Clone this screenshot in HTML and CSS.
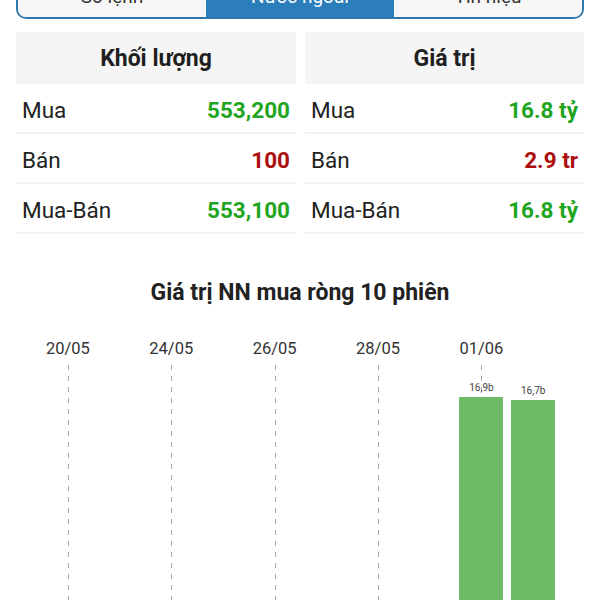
FILE: index.html
```html
<!DOCTYPE html>
<html lang="vi">
<head>
    <meta charset="UTF-8">
    <meta name="viewport" content="width=device-width, initial-scale=1.0">
    <title>Nước ngoài</title>
    <link rel="stylesheet" href="styles.css">
</head>
<body>
    <div class="page">
        <div class="tabs">
            <div class="tab">Sổ lệnh</div>
            <div class="tab active">Nước ngoài</div>
            <div class="tab">Tín hiệu</div>
        </div>

        <div class="tables">
            <div class="stat-table">
                <div class="stat-head">Khối lượng</div>
                <div class="stat-row"><span>Mua</span><span class="up">553,200</span></div>
                <div class="stat-row"><span>Bán</span><span class="down">100</span></div>
                <div class="stat-row"><span>Mua-Bán</span><span class="up">553,100</span></div>
            </div>
            <div class="stat-table">
                <div class="stat-head">Giá trị</div>
                <div class="stat-row"><span>Mua</span><span class="up">16.8 tỷ</span></div>
                <div class="stat-row"><span>Bán</span><span class="down">2.9 tr</span></div>
                <div class="stat-row"><span>Mua-Bán</span><span class="up">16.8 tỷ</span></div>
            </div>
        </div>

        <h2 class="chart-title">Giá trị NN mua ròng 10 phiên</h2>

        <div class="chart">
            <div class="col"><div class="date">20/05</div><div class="plot dashed"></div></div>
            <div class="col"><div class="date"></div><div class="plot"></div></div>
            <div class="col"><div class="date">24/05</div><div class="plot dashed"></div></div>
            <div class="col"><div class="date"></div><div class="plot"></div></div>
            <div class="col"><div class="date">26/05</div><div class="plot dashed"></div></div>
            <div class="col"><div class="date"></div><div class="plot"></div></div>
            <div class="col"><div class="date">28/05</div><div class="plot dashed"></div></div>
            <div class="col"><div class="date"></div><div class="plot"></div></div>
            <div class="col">
                <div class="date">01/06</div>
                <div class="plot dashed">
                    <div class="bar-label">16,9b</div>
                    <div class="bar" style="height: 308px"></div>
                </div>
            </div>
            <div class="col">
                <div class="date"></div>
                <div class="plot">
                    <div class="bar-label">16,7b</div>
                    <div class="bar" style="height: 305px"></div>
                </div>
            </div>
        </div>
    </div>
</body>
</html>
```

FILE: styles.css
```css
body {
    margin: 0;
    padding: 0;
    background-color: #ffffff;
    font-family: Roboto, "Noto Sans", sans-serif;
    color: #222222;
}

.page {
    padding: 0 16px;
    overflow: hidden;
}

.tabs {
    display: flex;
    margin-top: -22px;
    height: 41px;
    border: 2px solid #2f77ad;
    border-radius: 0 0 10px 10px;
    overflow: hidden;
    box-sizing: border-box;
}

.tab {
    flex: 1;
    display: flex;
    align-items: center;
    justify-content: center;
    padding-bottom: 5px;
    font-size: 19px;
    background-color: #f6f6f6;
    color: #333333;
}

.tab.active {
    background-color: #2b7dbb;
    color: #ffffff;
}

.tables {
    display: grid;
    grid-template-columns: 280px 1fr;
    gap: 9px;
    margin-top: 13px;
}

.stat-head {
    height: 52px;
    display: flex;
    align-items: center;
    justify-content: center;
    background-color: #f5f5f5;
    font-size: 23px;
    font-weight: 700;
    color: #1f1f1f;
}

.stat-row {
    height: 50px;
    display: flex;
    align-items: center;
    justify-content: space-between;
    padding: 3px 6px 0;
    border-bottom: 2px solid #f3f3f3;
    box-sizing: border-box;
    font-size: 22.5px;
    color: #222222;
}

.stat-row .up,
.stat-row .down {
    font-weight: 700;
}

.up {
    color: #1fa51f;
}

.down {
    color: #ac0e0e;
}

.chart-title {
    margin: 45px 0 0;
    text-align: center;
    font-size: 23px;
    font-weight: 700;
    color: #222222;
}

.chart {
    display: grid;
    grid-template-columns: repeat(10, 1fr);
    padding: 0 25px 0 26px;
    margin-top: 33px;
}

.col {
    display: flex;
    flex-direction: column;
    align-items: center;
}

.date {
    height: 22px;
    font-size: 16.5px;
    color: #333333;
    margin-bottom: 4px;
}

.plot {
    position: relative;
    width: 100%;
    height: 340px;
    display: flex;
    flex-direction: column;
    justify-content: flex-end;
    align-items: center;
}

.plot.dashed::before {
    content: "";
    position: absolute;
    top: 0;
    bottom: 0;
    left: 50%;
    width: 1px;
    background: repeating-linear-gradient(to bottom, #a8a8a8 0, #a8a8a8 5px, transparent 5px, transparent 11px);
}

.bar-label {
    position: relative;
    font-size: 10px;
    color: #444444;
    margin-bottom: 4px;
}

.bar {
    position: relative;
    width: 44px;
    background-color: #6dbb66;
}
```
